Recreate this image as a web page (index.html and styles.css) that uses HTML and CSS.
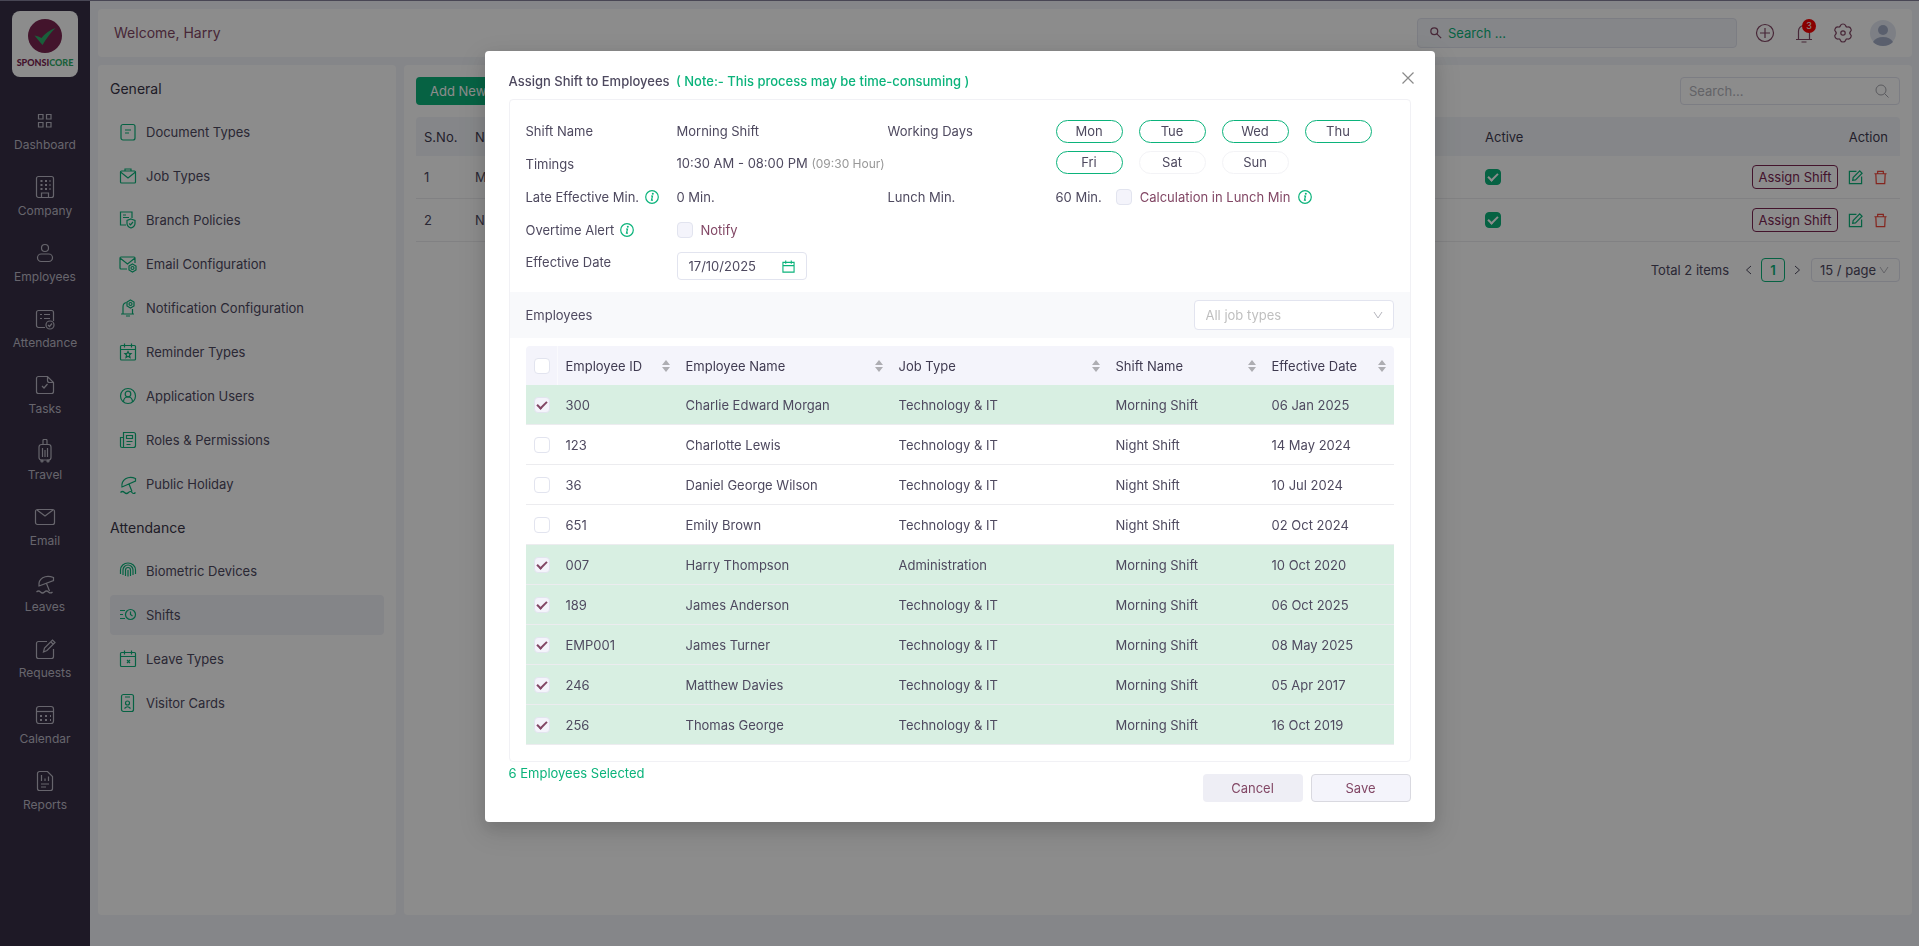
FILE: index.html
```html
<!DOCTYPE html>
<html lang="en">
<head>
<meta charset="utf-8">
<title>Sponsicore - Shifts</title>
<link rel="stylesheet" href="styles.css">
</head>
<body>
<div class="app">
  <aside class="sidebar">
    <a class="logo" href="#" aria-label="Sponsicore">
      <svg class="logo-mark" viewBox="0 0 34 34"><circle cx="17" cy="17" r="17" fill="#7b2551"/><path d="M6.500 16.500q4 .5 7 2.500Q19 12 27.500 9 21 15 14.500 26q-4-4.500-8-9.500z" fill="#2fae6b"/></svg>
      <span class="logo-text">SPONSI<span class="logo-green">CORE</span></span>
    </a>
    <nav class="main-nav">
      <a class="nav-item" href="#"><svg class="icon" viewBox="0 0 24 24"><path d="M5.500 5.500h4.500v4.500h-4.500zM13.500 5.500h4.500v4.500h-4.500zM5.500 13.500h4.500v4.500h-4.500zM13.500 13.500h4.500v4.500h-4.500z"/></svg>Dashboard</a>
      <a class="nav-item" href="#"><svg class="icon" viewBox="0 0 24 24"><rect x="3.500" y="1.500" width="17" height="21" rx="2"/><path d="M8.500 22v-4h7v4"/><path stroke-width="2" stroke-dasharray="2 2.500" d="M7.500 6h10M7.500 10h10M7.500 14h10"/></svg>Company</a>
      <a class="nav-item" href="#"><svg class="icon" viewBox="0 0 24 24"><circle cx="12" cy="7" r="3.500"/><rect x="4.500" y="13" width="15" height="7.500" rx="3.700"/></svg>Employees</a>
      <a class="nav-item" href="#"><svg class="icon" viewBox="0 0 24 24"><path d="M12 20.500H5.500a2 2 0 0 1-2-2v-13a2 2 0 0 1 2-2h13a2 2 0 0 1 2 2V14"/><path d="M7 7.500h2M11 7.500h6M7 11.500h2M11 11.500h6"/><circle cx="17" cy="18" r="4"/><path d="M15 18l1.500 1.500 2.500-3"/></svg>Attendance</a>
      <a class="nav-item" href="#"><svg class="icon" viewBox="0 0 24 24"><path d="M14.500 3.500h-9a2 2 0 0 0-2 2v13a2 2 0 0 0 2 2h13a2 2 0 0 0 2-2v-9zM14.500 3.500v4a2 2 0 0 0 2 2h4"/><path d="M9 13l2 2 3.500-4"/></svg>Tasks</a>
      <a class="nav-item" href="#"><svg class="icon" viewBox="0 0 24 24"><path d="M10 6V1.500q0-1 1-1h2q1 0 1 1V6"/><rect x="6" y="5.500" width="12" height="15.500" rx="2.500"/><path d="M9.500 9v9M12 11v7M14.500 9v9"/><circle cx="9" cy="22" r="1"/><circle cx="15" cy="22" r="1"/></svg>Travel</a>
      <a class="nav-item" href="#"><svg class="icon" viewBox="0 0 24 24"><rect x="2.500" y="4.500" width="19" height="15" rx="2"/><path d="M4 5l8 6 8-6"/></svg>Email</a>
      <a class="nav-item" href="#"><svg class="icon" viewBox="0 0 24 24"><path d="M6 15C5 8 12 3 20.500 6.500V9.500zM13.500 12.500l3 7.500M3.500 21q2-2 4 0t4 0 4 0 4 0"/></svg>Leaves</a>
      <a class="nav-item" href="#"><svg class="icon" viewBox="0 0 24 24"><path d="M14 4.500H5.500a2 2 0 0 0-2 2v13a2 2 0 0 0 2 2h13a2 2 0 0 0 2-2V12"/><path d="M10.500 15l1-4 8-8 2.500 2.500-8 8zM18 5l2.500 2.500"/></svg>Requests</a>
      <a class="nav-item" href="#"><svg class="icon" viewBox="0 0 24 24"><rect x="3.500" y="3.500" width="17" height="17" rx="2.500"/><path d="M3.500 8.500h17"/><path stroke-width="2" stroke-dasharray="2 3" d="M7 13h11M7 17h11"/></svg>Calendar</a>
      <a class="nav-item" href="#"><svg class="icon" viewBox="0 0 24 24"><path d="M14.500 2.500h-8a2 2 0 0 0-2 2v15a2 2 0 0 0 2 2h11a2 2 0 0 0 2-2V7.500z"/><path d="M8.500 6v6M12 9.500V12M15.500 7.500V12M8 15h8M8 18h5"/></svg>Reports</a>
    </nav>
  </aside>

  <div class="page">
    <header class="topbar card">
      <div class="welcome">Welcome, Harry</div>
      <label class="global-search">
        <svg class="glass" viewBox="0 0 14 14"><circle cx="5" cy="5" r="4"/><path d="M8 8l5 5"/></svg>
        <input type="search" placeholder="Search ..." aria-label="Search">
      </label>
      <div class="top-actions">
        <button class="icon-btn" type="button" aria-label="Add"><svg class="icon" viewBox="0 0 24 24"><circle cx="12" cy="12" r="8.500"/><path d="M12 7v10M7 12h10"/></svg></button>
        <button class="icon-btn" type="button" aria-label="Notifications"><svg class="icon" viewBox="0 0 24 24"><path d="M4 18.500h16M6.500 18.500V10a5.500 5.500 0 0 1 11 0v8.500M9.500 21h5"/></svg><span class="badge">3</span></button>
        <button class="icon-btn" type="button" aria-label="Settings"><svg class="icon" viewBox="0 0 24 24"><path stroke-linejoin="round" d="M12 3q2 0 2.500 1.500.5 1.800 2 1.500Q19 5.500 20 8q.7 1.500-.5 2.500-1.500 1.500 0 3 1.200 1 .5 2.500-1 2.500-3.500 2-1.500-.3-2 1.500Q14 21 12 21t-2.500-1.500q-.5-1.800-2-1.500Q5 18.500 4 16q-.7-1.500.5-2.500 1.500-1.500 0-3Q3.300 9.500 4 8q1-2.500 3.500-2 1.500.3 2-1.500Q10 3 12 3z"/><circle cx="12" cy="12" r="2.200"/></svg></button>
        <button class="icon-btn" type="button" aria-label="Account"><svg class="avatar" viewBox="0 0 26 26"><circle cx="13" cy="13" r="13" fill="#e3e8f3"/><circle cx="13" cy="10" r="5" fill="#a4aec6"/><path d="M3 22q3-5 10-5t10 5q-4 4-10 4T3 22z" fill="#a4aec6"/></svg></button>
      </div>
    </header>

    <div class="content">
      <section class="settings card">
        <h2 class="group-title">General</h2>
        <nav class="menu">
          <a class="menu-item" href="#"><svg class="icon" viewBox="0 0 24 24"><rect x="5" y="4.500" width="14" height="15.500" rx="2"/><path d="M9 10h6M9 13h4"/></svg>Document Types</a>
          <a class="menu-item" href="#"><svg class="icon" viewBox="0 0 24 24"><rect x="4.500" y="7" width="15" height="12" rx="1"/><path d="M9 7V5h6v2M4.500 8l7.500 6 7.500-6"/></svg>Job Types</a>
          <a class="menu-item" href="#"><svg class="icon" viewBox="0 0 24 24"><path d="M10 17H4.500V4H16v6M7 7h3M7 9.500h6M15 11l4 1.500v3q0 3-4 4.500-4-1.500-4-4.500v-3z"/><path d="M13.200 15.500l1.300 1.300 2.500-2.800"/></svg>Branch Policies</a>
          <a class="menu-item" href="#"><svg class="icon" viewBox="0 0 24 24"><path d="M11 17H5a1 1 0 0 1-1-1V6a1 1 0 0 1 1-1h13a1 1 0 0 1 1 1v5M4 6l7.500 6L19 6"/><path d="M16.500 12l3.500 2v4l-3.500 2-3.500-2v-4z"/><circle cx="16.500" cy="16" r="1.500"/></svg>Email Configuration</a>
          <a class="menu-item" href="#"><svg class="icon" viewBox="0 0 24 24"><path d="M5 18h13M7 18v-7q0-4 3.500-4.500M16.500 13v5M10 20h4"/><path d="M14.500 4l3.500 2v4l-3.500 2-3.500-2V6z"/><circle cx="14.500" cy="8" r="1.500"/></svg>Notification Configuration</a>
          <a class="menu-item" href="#"><svg class="icon" viewBox="0 0 24 24"><rect x="4.500" y="5.500" width="15" height="14.500" rx="1"/><path d="M4.500 9.500h15M8.500 3.500v4M15.500 3.500v4M12 11.500l1 2h2l-1.500 1.500.5 2.500-2-1.200-2 1.200.5-2.500L9 13.500h2z"/></svg>Reminder Types</a>
          <a class="menu-item" href="#"><svg class="icon" viewBox="0 0 24 24"><circle cx="12" cy="12" r="7.500"/><circle cx="12" cy="10" r="2.800"/><path d="M7.500 18q0-5 4.500-5t4.500 5"/></svg>Application Users</a>
          <a class="menu-item" href="#"><svg class="icon" viewBox="0 0 24 24"><path d="M7.500 19.500H6a1.500 1.500 0 0 1-1.500-1.500V9.500h3"/><path d="M7.500 4.500h10a2 2 0 0 1 2 2v11a2 2 0 0 1-2 2h-10zM10.500 7.500h6v3h-6zM10.500 13.500h6M10.500 16.500h4"/></svg>Roles &amp; Permissions</a>
          <a class="menu-item" href="#"><svg class="icon" viewBox="0 0 24 24"><path d="M6 15C5 8 12 3 19.500 6.500V9zM13 12l3 7.500M4.500 20.500q2-2 4 0t4 0 3.500 0 3.500 0"/></svg>Public Holiday</a>
        </nav>
        <h2 class="group-title">Attendance</h2>
        <nav class="menu">
          <a class="menu-item" href="#"><svg class="icon" viewBox="0 0 24 24"><path d="M4.500 15v-4a7.500 7 0 0 1 15 0v4M7 16v-5a5 5 0 0 1 10 0v5M9.500 17v-6a2.500 2.500 0 0 1 5 0v6M12 11v6.500"/></svg>Biometric Devices</a>
          <a class="menu-item active" href="#"><svg class="icon" viewBox="0 0 24 24"><circle cx="14.500" cy="11.500" r="5"/><path d="M14.500 8.500v3l2 1.500M4 7.500h5M4 11.500h3M4 15.500h5"/></svg>Shifts</a>
          <a class="menu-item" href="#"><svg class="icon" viewBox="0 0 24 24"><rect x="4.500" y="5.500" width="15" height="14" rx="1"/><path d="M4.500 9.500h15M8.500 3.500v4M15.500 3.500v4M11 13l3 3M14 13l-3 3"/></svg>Leave Types</a>
          <a class="menu-item" href="#"><svg class="icon" viewBox="0 0 24 24"><rect x="5.500" y="3.500" width="12" height="17" rx="2"/><path d="M9 6h5M8.500 17.500q3-3.500 6 0"/><circle cx="11.500" cy="12" r="2"/></svg>Visitor Cards</a>
        </nav>
      </section>

      <main class="shifts card">
        <div class="toolbar">
          <button class="add-btn" type="button">Add New</button>
          <label class="table-search">
            <input type="search" placeholder="Search..." aria-label="Search shifts">
            <svg class="glass" viewBox="0 0 14 14"><circle cx="6" cy="6" r="5"/><path d="M9.500 9.500l4 4"/></svg>
          </label>
        </div>
        <table class="shift-table">
          <colgroup><col class="c-no"><col><col class="c-active"><col class="c-action"></colgroup>
          <thead><tr><th>S.No.</th><th>Name</th><th>Active</th><th class="right">Action</th></tr></thead>
          <tbody>
            <tr><td>1</td><td>Morning Shift</td><td><input class="check solid" type="checkbox" checked aria-label="Morning Shift active"></td>
              <td><div class="row-actions"><button class="assign-btn" type="button">Assign Shift</button><button class="mini edit" type="button" aria-label="Edit"><svg viewBox="0 0 16 16"><path d="M9 1.500H1.500v13h13V7M5 11l.5-3 7-7 2.500 2.500-7 7z"/></svg></button><button class="mini trash" type="button" aria-label="Delete"><svg viewBox="0 0 16 16"><path d="M1.500 4h13M5 3.500v-2h6v2M3 4l.5 10.500h9L13 4"/></svg></button></div></td></tr>
            <tr><td>2</td><td>Night Shift</td><td><input class="check solid" type="checkbox" checked aria-label="Night Shift active"></td>
              <td><div class="row-actions"><button class="assign-btn" type="button">Assign Shift</button><button class="mini edit" type="button" aria-label="Edit"><svg viewBox="0 0 16 16"><path d="M9 1.500H1.500v13h13V7M5 11l.5-3 7-7 2.500 2.500-7 7z"/></svg></button><button class="mini trash" type="button" aria-label="Delete"><svg viewBox="0 0 16 16"><path d="M1.500 4h13M5 3.500v-2h6v2M3 4l.5 10.500h9L13 4"/></svg></button></div></td></tr>
          </tbody>
        </table>
        <div class="pager">
          <span class="total">Total 2 items</span>
          <div class="pages">
            <button class="arrow" type="button" aria-label="Previous page"><svg viewBox="0 0 10 10"><path d="M7 1L2.500 5 7 9"/></svg></button>
            <button class="page-no" type="button">1</button>
            <button class="arrow" type="button" aria-label="Next page"><svg viewBox="0 0 10 10"><path d="M3 1l4.500 4L3 9"/></svg></button>
          </div>
          <div class="select-box page-size">
            <select aria-label="Page size"><option>15 / page</option></select>
            <svg viewBox="0 0 10 10"><path d="M1 2l4 6 4-6"/></svg>
          </div>
        </div>
      </main>
    </div>
  </div>
</div>

<div class="overlay">
  <div class="modal" role="dialog" aria-labelledby="modal-title">
    <button class="close" type="button" aria-label="Close"><svg viewBox="0 0 12 12"><path d="M.5.5l11 11M11.500.5l-11 11"/></svg></button>
    <h1 class="modal-title" id="modal-title">Assign Shift to Employees <span class="note">( Note:- This process may be time-consuming )</span></h1>

    <div class="panel">
      <div class="details">
        <span class="c1">Shift Name</span><span class="c2">Morning Shift</span>
        <span class="c3">Working Days</span>
        <div class="days">
          <span class="day on">Mon</span><span class="day on">Tue</span><span class="day on">Wed</span><span class="day on">Thu</span>
          <span class="day on">Fri</span><span class="day">Sat</span><span class="day">Sun</span>
        </div>
        <span class="c1">Timings</span><span class="c2">10:30 AM - 08:00 PM <span class="muted">(09:30 Hour)</span></span>
        <span class="c1 inline">Late Effective Min. <svg class="info" viewBox="0 0 14 14"><circle cx="7" cy="7" r="6.300"/><path d="M6 6h1.500L6.500 10.200h1.500"/><circle class="dot" cx="7.800" cy="3.800" r="1"/></svg></span><span class="c2">0 Min.</span>
        <span class="c3">Lunch Min.</span>
        <div class="c4 inline lunch"><span>60 Min.</span><label class="inline tick"><input class="check" type="checkbox" disabled>Calculation in Lunch Min</label><svg class="info" viewBox="0 0 14 14"><circle cx="7" cy="7" r="6.300"/><path d="M6 6h1.500L6.500 10.200h1.500"/><circle class="dot" cx="7.800" cy="3.800" r="1"/></svg></div>
        <span class="c1 inline">Overtime Alert <svg class="info" viewBox="0 0 14 14"><circle cx="7" cy="7" r="6.300"/><path d="M6 6h1.500L6.500 10.200h1.500"/><circle class="dot" cx="7.800" cy="3.800" r="1"/></svg></span>
        <label class="c2 inline tick"><input class="check" type="checkbox" disabled>Notify</label>
        <label class="c1 date-label" for="eff-date">Effective Date</label>
        <div class="c2 date-box"><input id="eff-date" type="text" value="17/10/2025"><svg viewBox="0 0 14 14"><path d="M1 2.500h12v10.500H1zM1 6h12M4 .5v3.500M10 .5v3.500"/></svg></div>
      </div>

      <div class="strip">
        <span>Employees</span>
        <div class="select-box job-filter">
          <select aria-label="Job type"><option>All job types</option></select>
          <svg viewBox="0 0 10 10"><path d="M1 2l4 6 4-6"/></svg>
        </div>
      </div>

      <div class="table-wrap">
        <table class="emp-table">
          <colgroup><col class="e-check"><col class="e-id"><col class="e-name"><col class="e-job"><col class="e-shift"><col class="e-date"></colgroup>
          <thead><tr>
            <th><input class="check" type="checkbox" aria-label="Select all"></th>
            <th><div class="sortable">Employee ID<svg viewBox="0 0 8 12"><path d="M4 0l4 5H0zM4 12L0 7h8z"/></svg></div></th>
            <th><div class="sortable">Employee Name<svg viewBox="0 0 8 12"><path d="M4 0l4 5H0zM4 12L0 7h8z"/></svg></div></th>
            <th><div class="sortable">Job Type<svg viewBox="0 0 8 12"><path d="M4 0l4 5H0zM4 12L0 7h8z"/></svg></div></th>
            <th><div class="sortable">Shift Name<svg viewBox="0 0 8 12"><path d="M4 0l4 5H0zM4 12L0 7h8z"/></svg></div></th>
            <th><div class="sortable">Effective Date<svg viewBox="0 0 8 12"><path d="M4 0l4 5H0zM4 12L0 7h8z"/></svg></div></th>
          </tr></thead>
          <tbody>
            <tr class="selected"><td><input class="check" type="checkbox" checked aria-label="Select 300"></td><td>300</td><td>Charlie Edward Morgan</td><td>Technology &amp; IT</td><td>Morning Shift</td><td>06 Jan 2025</td></tr>
            <tr><td><input class="check" type="checkbox" aria-label="Select 123"></td><td>123</td><td>Charlotte Lewis</td><td>Technology &amp; IT</td><td>Night Shift</td><td>14 May 2024</td></tr>
            <tr><td><input class="check" type="checkbox" aria-label="Select 36"></td><td>36</td><td>Daniel George Wilson</td><td>Technology &amp; IT</td><td>Night Shift</td><td>10 Jul 2024</td></tr>
            <tr><td><input class="check" type="checkbox" aria-label="Select 651"></td><td>651</td><td>Emily Brown</td><td>Technology &amp; IT</td><td>Night Shift</td><td>02 Oct 2024</td></tr>
            <tr class="selected"><td><input class="check" type="checkbox" checked aria-label="Select 007"></td><td>007</td><td>Harry Thompson</td><td>Administration</td><td>Morning Shift</td><td>10 Oct 2020</td></tr>
            <tr class="selected"><td><input class="check" type="checkbox" checked aria-label="Select 189"></td><td>189</td><td>James Anderson</td><td>Technology &amp; IT</td><td>Morning Shift</td><td>06 Oct 2025</td></tr>
            <tr class="selected"><td><input class="check" type="checkbox" checked aria-label="Select EMP001"></td><td>EMP001</td><td>James Turner</td><td>Technology &amp; IT</td><td>Morning Shift</td><td>08 May 2025</td></tr>
            <tr class="selected"><td><input class="check" type="checkbox" checked aria-label="Select 246"></td><td>246</td><td>Matthew Davies</td><td>Technology &amp; IT</td><td>Morning Shift</td><td>05 Apr 2017</td></tr>
            <tr class="selected"><td><input class="check" type="checkbox" checked aria-label="Select 256"></td><td>256</td><td>Thomas George</td><td>Technology &amp; IT</td><td>Morning Shift</td><td>16 Oct 2019</td></tr>
          </tbody>
        </table>
      </div>
    </div>

    <div class="footer">
      <span class="count">6 Employees Selected</span>
      <div class="footer-btns">
        <button class="btn cancel" type="button">Cancel</button>
        <button class="btn save" type="button">Save</button>
      </div>
    </div>
  </div>
</div>
</body>
</html>
```
FILE: styles.css
```css
*, *::after { box-sizing: border-box; }

:root {
  --ink: #4e495f;
  --green: #0bb37b;
  --plum: #824765;
  --line: #e2e4ef;
}

body {
  margin: 0;
  font: 13px/20px Inter, "Liberation Sans", sans-serif;
  color: var(--ink);
  background: #f3f5fa;
}

button, input, select { font: inherit; color: inherit; margin: 0; }
button { cursor: pointer; padding: 0; border: 0; background: none; }
a { color: inherit; text-decoration: none; }
svg { display: block; flex: none; fill: none; stroke: currentColor; }
h1, h2 { margin: 0; }

.app { display: flex; min-height: 100vh; border-top: 1px solid #83809a; }
.card { background: #fff; border-radius: 4px; }
.icon { width: 24px; height: 24px; stroke-width: 1.2; }

/* Sidebar */
.sidebar { width: 90px; flex: none; background: #372f45; padding-top: 10px; }
.logo {
  display: flex; flex-direction: column; align-items: center; gap: 4px;
  width: 66px; height: 66px; margin: 0 auto 32px; padding-top: 8px;
  background: #fff; border-radius: 8px;
}
.logo-mark { width: 34px; height: 34px; stroke: none; }
.logo-text { font: 900 9px/12px Lato, sans-serif; color: #7b2551; }
.logo-green { color: #2fae6b; }
.main-nav { display: flex; flex-direction: column; gap: 22px; }
.nav-item {
  display: flex; flex-direction: column; align-items: center; gap: 4px;
  font-size: 12px; line-height: 16px; color: #bcb9c6;
}

/* Page */
.page { flex: 1; min-width: 0; display: flex; flex-direction: column; gap: 8px; padding: 8px 7px 31px 8px; }
.topbar { display: flex; align-items: center; height: 48px; padding: 0 16px; }
.welcome { flex: 1; font-size: 14px; color: var(--plum); }
.global-search {
  display: flex; align-items: center; gap: 6px; width: 320px; height: 30px; padding: 0 12px;
  border: 1px solid var(--line); border-radius: 4px; background: #f3f5fa; color: var(--plum);
}
.glass { width: 12px; height: 12px; stroke-width: 1.5; }
.global-search input, .table-search input { flex: 1; min-width: 0; padding: 0; border: 0; outline: 0; background: none; }
.global-search input::placeholder { color: var(--green); opacity: 1; }
.top-actions { display: flex; align-items: center; gap: 15px; margin-left: 16px; color: var(--plum); }
.icon-btn { position: relative; }
.badge {
  position: absolute; top: -2px; right: 0; width: 14px; height: 14px; border-radius: 7px;
  background: #fa0000; color: #fff; font-size: 9px; line-height: 14px;
}
.avatar { width: 26px; height: 26px; stroke: none; }

.content { flex: 1; display: flex; gap: 8px; }
.settings { width: 298px; flex: none; padding: 0 12px; }
.group-title { font-size: 14px; font-weight: 400; line-height: 47px; color: #3a3548; }
.menu { display: flex; flex-direction: column; gap: 4px; }
.menu-item { display: flex; align-items: center; gap: 6px; height: 40px; padding: 0 6px; border-radius: 4px; }
.menu-item .icon { color: var(--green); }
.menu-item.active { background: #f1f3f8; }

.shifts { flex: 1; min-width: 0; padding: 12px; }
.toolbar { display: flex; justify-content: space-between; margin-bottom: 12px; }
.add-btn { height: 28px; padding: 0 14px; border-radius: 4px; background: var(--green); color: #fff; }
.table-search {
  display: flex; align-items: center; width: 220px; height: 28px; padding: 0 10px 0 8px;
  border: 1px solid var(--line); border-radius: 4px; color: #a5a5ad;
}
.table-search input::placeholder { color: #b4b4bc; opacity: 1; }
.table-search .glass { width: 14px; height: 14px; stroke-width: 1; }

table { width: 100%; border-collapse: separate; border-spacing: 0; table-layout: fixed; }
th { font-weight: 400; text-align: left; height: 39px; padding: 0 8px; color: #3f3a50; }
td { padding: 0 8px; border-bottom: 1px solid #ececef; }
.shift-table th { background: #f3f5fa; }
.shift-table th:first-child { border-top-left-radius: 4px; }
.shift-table th:last-child { border-top-right-radius: 4px; padding-right: 12px; }
.shift-table td { height: 43px; }
.shift-table td:last-child { padding-right: 12px; }
.shift-table .right { text-align: right; }
.c-no { width: 51px; }
.c-active { width: 164px; }
.c-action { width: 259px; }
.row-actions { display: flex; align-items: center; justify-content: flex-end; gap: 10px; }
.assign-btn { width: 86px; height: 24px; border: 1px solid #7b2551; border-radius: 4px; color: #7b2551; white-space: nowrap; }
.mini svg { width: 15px; height: 15px; stroke-width: 1.3; }
.edit { color: var(--green); }
.trash { color: #f04438; }

.pager { display: flex; align-items: center; justify-content: flex-end; gap: 9px; margin-top: 16px; }
.total { margin-right: 6px; }
.pages { display: flex; align-items: center; gap: 7px; }
.arrow svg { width: 10px; height: 10px; }
.page-no { width: 24px; height: 24px; border: 1px solid var(--green); border-radius: 4px; color: var(--green); font-weight: 600; }

.select-box { position: relative; display: flex; align-items: center; }
.select-box select {
  appearance: none; width: 100%; height: 100%; padding: 0 8px; outline: 0;
  border: 1px solid var(--line); border-radius: 4px; background: #fff;
}
.select-box svg { position: absolute; right: 11px; width: 10px; height: 10px; color: #b5b5bd; pointer-events: none; }
.page-size { width: 89px; height: 24px; }

/* Check boxes */
.check {
  appearance: none; display: block; flex: none; width: 16px; height: 16px;
  border: 1px solid var(--line); border-radius: 4px; background: #fff;
}
.check:disabled { background: #f4f4fb; }
.check:checked { background: #f4f4fb; }
.check:checked::after {
  content: ""; display: block; width: 10px; height: 6px; margin: 3px 2px;
  border: solid var(--plum); border-width: 0 0 2px 2px; transform: rotate(-45deg);
}
.check.solid { background: var(--green); border-color: var(--green); }
.check.solid::after { border-color: #fff; }

/* Modal */
.overlay {
  position: fixed; inset: 0; display: flex; justify-content: center; align-items: flex-start;
  padding-top: 51px; background: rgba(0, 0, 0, .45);
}
.modal {
  position: relative; width: 950px; padding: 20px 24px; background: #fff; border-radius: 4px;
  box-shadow: 0 6px 16px rgba(0, 0, 0, .12), 0 9px 28px 8px rgba(0, 0, 0, .08);
}
.close { position: absolute; top: 21px; right: 21px; color: #8a8a8a; }
.close svg { width: 12px; height: 12px; stroke-width: 1.2; }
.modal-title { margin-bottom: 8px; font-size: 13px; line-height: 20px; font-weight: 500; }
.note { margin-left: 3px; color: var(--green); }
.panel { border: 1px solid #f1f1f5; border-radius: 4px; }

.details {
  display: grid; grid-template-columns: 151px 211px 168px 1fr; grid-template-rows: repeat(4, 33px) 40px;
  align-items: center; padding: 14px 16px 6px;
}
.c1 { grid-column: 1; }
.c2 { grid-column: 2; white-space: nowrap; }
.c3 { grid-column: 3; }
.c4 { grid-column: 4; }
.inline { display: flex; align-items: center; gap: 6px; white-space: nowrap; }
.inline.tick { gap: 8px; color: var(--plum); }
.inline.lunch { gap: 8px; }
.lunch .tick { margin-left: 6px; }
.date-label { align-self: start; line-height: 33px; }
.muted { font-size: 12px; color: #989898; }
.info { width: 14px; height: 14px; color: var(--green); stroke-width: 1.2; }
.info .dot { fill: currentColor; stroke: none; }
.days { grid-column: 4; grid-row: 1 / 3; display: grid; grid-template-columns: repeat(4, 67px); gap: 8px 16px; }
.day { height: 23px; line-height: 21px; text-align: center; border: 1px solid #f3f3f6; border-radius: 12px; }
.day.on { border-color: var(--green); }
.date-box { display: flex; align-items: center; width: 130px; height: 28px; padding: 0 11px; border: 1px solid var(--line); border-radius: 4px; }
.date-box input { flex: 1; min-width: 0; padding: 0; border: 0; outline: 0; background: none; }
.date-box svg { width: 13px; height: 13px; color: var(--green); stroke-width: 1.2; }

.strip { display: flex; align-items: center; justify-content: space-between; height: 46px; padding: 0 16px; background: #f8f9fb; }
.job-filter { width: 200px; height: 30px; }
.job-filter select { padding: 0 11px; color: #bfbfbf; }

.table-wrap { padding: 8px 16px 16px; }
.emp-table th { background: #f4f4fb; }
.emp-table th:first-child { border-top-left-radius: 4px; border-right: 1px solid #fafafd; }
.emp-table th:last-child { border-top-right-radius: 4px; }
.emp-table td { height: 40px; }
.selected td { background: #d8efe2; }
.e-check { width: 32px; }
.e-id { width: 120px; }
.e-name { width: 213px; }
.e-shift { width: 156px; }
.e-date { width: 130px; }
.sortable { display: flex; align-items: center; justify-content: space-between; white-space: nowrap; }
.sortable svg { width: 8px; height: 12px; fill: #adadb2; stroke: none; }

.footer { display: flex; justify-content: space-between; }
.count { margin-top: 1px; color: var(--green); }
.footer-btns { display: flex; gap: 8px; margin-top: 12px; }
.btn { width: 100px; height: 28px; border-radius: 4px; color: var(--plum); }
.cancel { background: #eeeef5; }
.save { background: #f4f4fb; border: 1px solid #d9d9e0; }
```
